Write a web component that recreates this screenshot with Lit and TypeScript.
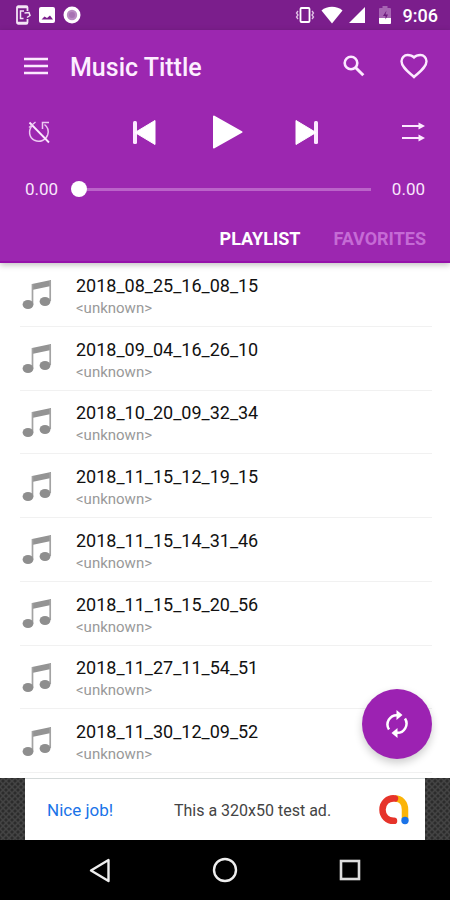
import { LitElement, html, css, svg } from "lit";
import { customElement, property, state } from "lit/decorators.js";
import { classMap } from "lit/directives/class-map.js";

const icon = (w: number, h: number, body: unknown) =>
  html`<svg width=${w} height=${h} viewBox="0 0 ${w} ${h}" fill="none" aria-hidden="true">${body}</svg>`;

const icons = {
  cast: icon(16, 20, svg`<path d="M12.500 6V2.500a1.300 1.300 0 0 0-1.300-1.300H3.300A1.300 1.300 0 0 0 2 2.500v15a1.300 1.300 0 0 0 1.300 1.300h7.900a1.300 1.300 0 0 0 1.300-1.300V14" stroke="#f3e5f5" stroke-width="1.800"/><path d="M2 2.200h10.500M2 17.800h10.500" stroke="#f3e5f5" stroke-width="2.200"/><path d="M9 6H5.500v7.500H8.500M9.500 8l4.500-.5 1 3-3 2" stroke="#f3e5f5" stroke-width="1.500"/>`),
  image: icon(16, 16, svg`<rect width="16" height="16" rx="2" fill="#fff"/><path d="M2.500 12.500l3-3 2.500 1.500 3-2.500 3 4z" fill="#7b1e8c"/>`),
  disc: icon(18, 18, svg`<circle cx="9" cy="9" r="8.500" fill="#fff"/><circle cx="9" cy="9" r="5.200" fill="#b98bc2"/><circle cx="9" cy="9" r="3" fill="#a873b3"/>`),
  vibrate: icon(20, 18, svg`<rect x="5.500" y="2" width="9" height="14" rx="1" stroke="#fff" stroke-width="1.800"/><path d="M3 5L1.500 7 3 9 1.500 11 3 13M17 5l1.500 2L17 9l1.500 2-1.500 2" stroke="#e1c4e6" stroke-width="1.300"/>`),
  wifi: icon(22, 18, svg`<path d="M0.500 4.500C6-.5 16-.5 21.500 4.500L11 17.500z" fill="#fff"/>`),
  signal: icon(16, 16, svg`<path d="M16 0v16H0z" fill="#fff"/>`),
  battery: icon(12, 18, svg`<path d="M3.500 0h5v2H11a1 1 0 0 1 1 1v9H0V3a1 1 0 0 1 1-1h2.500z" fill="#a765b3"/><path d="M0 12h12v5a1 1 0 0 1-1 1H1a1 1 0 0 1-1-1z" fill="#fff"/><path d="M7.500 4.500L4 10h2.500v3.500L9 8.500H6.500z" fill="#6d1a7d"/>`),
  menu: icon(24, 18, svg`<path d="M0 2h24M0 9h24M0 16h24" stroke="#fce9ff" stroke-width="2.600"/>`),
  search: icon(22, 22, svg`<circle cx="8" cy="8" r="6.300" stroke="#fce9ff" stroke-width="2.600"/><path d="M12.500 12.500L20.300 20.300" stroke="#fce9ff" stroke-width="3"/>`),
  heart: icon(28, 26, svg`<path d="M14 24C8 18.500 1.500 14 1.500 8.300 1.500 4.700 4.200 2 7.600 2 10.200 2 12.600 3 14 4.500 15.400 3 17.800 2 20.400 2c3.400 0 6.100 2.700 6.100 6.300C26.500 14 20 18.500 14 24z" stroke="#fce9ff" stroke-width="2.400"/>`),
  repeatOff: icon(24, 24, svg`<path d="M5.500 5.500C.8 10 2 17.500 7.500 20.300c5.500 2.500 11.500-.3 13.200-5.500 1.200-4-.2-8-3.200-10.300" stroke="#ecc9f2" stroke-width="1.500"/><path d="M22 2.500h-6.500V9" stroke="#ecc9f2" stroke-width="1.500"/><path d="M2.500 2.500L22 22.500" stroke="#fce9ff" stroke-width="1.800"/><path d="M2 7.500L8.500 2" stroke="#ecc9f2" stroke-width="1.300"/>`),
  previous: icon(24, 26, svg`<rect x="0" y="2" width="4" height="23" rx="1.500" fill="#fce9ff"/><path d="M2 13.500L22 1.500v24z" fill="#fff" stroke="#fff" stroke-linejoin="round"/>`),
  play: icon(36, 36, svg`<path d="M6 2.500L33.500 18 6 33.500z" fill="#fff" stroke="#fff" stroke-width="2" stroke-linejoin="round"/>`),
  next: icon(24, 26, svg`<rect x="19" y="2" width="4" height="23" rx="1.500" fill="#fce9ff"/><path d="M21 13.500L1 1.500v24z" fill="#fff" stroke="#fff" stroke-linejoin="round"/>`),
  order: icon(24, 20, svg`<path d="M1 4h18M1 16h18" stroke="#fce9ff" stroke-width="1.800"/><path d="M17.500 .5L24 4l-6.500 3.500zM17.500 12.500l6.500 3.500-6.500 3.500z" fill="#fce9ff"/>`),
  note: icon(30, 32, svg`<path d="M10 6L29 2v6L10 12z" fill="#949494"/><path d="M10.500 6v20.500M28.200 3v20" stroke="#a3a3a3" stroke-width="1.700"/><ellipse cx="6" cy="26.500" rx="5.400" ry="4.500" fill="#8e8e8e"/><ellipse cx="23" cy="23.500" rx="5.400" ry="4.500" fill="#8e8e8e"/>`),
  refresh: icon(24, 28, svg`<path d="M4 19.500A9.300 9.300 0 0 1 12.500 5.200M20 8.500A9.300 9.300 0 0 1 11.500 22.800" stroke="#fff" stroke-width="2.500"/><path d="M11.500 0l6 5-6 5zM12.500 18l-6 5 6 5z" fill="#fff"/>`),
  admob: icon(32, 32, svg`<path d="M17 4.500c6 0 10 4.500 10 11V25" stroke="#fbb408" stroke-width="6.500"/><path d="M17 4.500C10 3.500 4.500 9 4.500 15.800c0 6.500 5 11.300 11.500 11" stroke="#e6332a" stroke-width="6.500" stroke-linecap="round"/><circle cx="27" cy="26.500" r="3.700" fill="#1a73e8"/>`),
  back: icon(24, 26, svg`<path d="M3 13.500L20.500 3v21z" stroke="#eee" stroke-width="2.400" stroke-linejoin="round"/>`),
  home: icon(26, 26, svg`<circle cx="13" cy="13" r="11" stroke="#eee" stroke-width="2.400"/>`),
  recent: icon(22, 22, svg`<rect x="2" y="2" width="18" height="18" stroke="#ddd" stroke-width="2.600"/>`),
};

const reset = css`
  :host { display: block; }
  * { box-sizing: border-box; }
  svg { display: block; }
  button { display: flex; align-items: center; justify-content: center; margin: 0; padding: 0; border: 0; background: none; font: inherit; color: inherit; cursor: pointer; }
`;

@customElement("status-bar")
export class StatusBar extends LitElement {
  static styles = [reset, css`
    .bar { display: flex; align-items: center; justify-content: space-between; height: 30px; padding: 0 12px 0 15px; background: #7b1e8c; color: #fff; }
    .group { display: flex; align-items: center; }
    .left { gap: 8px; }
    .right { gap: 6px; }
    .power { display: flex; align-items: center; gap: 12px; margin-left: 8px; }
    .time { font-size: 18px; line-height: 20px; font-weight: 500; padding-top: 2px; }
  `];
  render() {
    return html`<div class="bar">
      <div class="group left">${icons.cast}${icons.image}${icons.disc}</div>
      <div class="group right">${icons.vibrate}${icons.wifi}${icons.signal}
        <div class="power">${icons.battery}<span class="time">9:06</span></div>
      </div>
    </div>`;
  }
}

@customElement("player-header")
export class PlayerHeader extends LitElement {
  @state() private tab = "PLAYLIST";
  static styles = [reset, css`
    :host { position: relative; z-index: 1; }
    .header { background: #9c27b0; color: #fff; border-bottom: 2px solid #9511aa; box-shadow: 0 2px 6px rgba(0, 0, 0, 0.25); }
    .toolbar { display: flex; align-items: center; height: 72px; padding: 0 22px 0 24px; }
    .title { flex: 1; margin: 0; padding: 4px 0 0 22px; font-size: 25px; line-height: 28px; font-weight: 500; color: #fdeeff; }
    .actions { display: flex; gap: 35px; }
    .controls { display: flex; align-items: center; justify-content: space-between; height: 60px; padding: 0 25px 0 27px; }
    .transport { display: flex; align-items: center; gap: 51px; }
    .seek { display: flex; align-items: center; gap: 13px; height: 54px; padding: 0 25px; font-size: 17px; line-height: 20px; color: #f9e6fc; }
    .slider { flex: 1; min-width: 0; height: 16px; margin: 0; appearance: none; background: linear-gradient(#bb63c9, #bb63c9) center / calc(100% - 16px) 3px no-repeat; }
    .slider::-webkit-slider-thumb { appearance: none; width: 16px; height: 16px; border-radius: 50%; background: #fff; }
    .tabs { display: flex; justify-content: flex-end; gap: 33px; height: 45px; padding: 0 24px; }
    .tab { font-size: 18px; line-height: 20px; font-weight: 700; color: #c56bd5; }
    .active { color: #fff; }
  `];
  render() {
    return html`<header class="header">
      <div class="toolbar">
        <button aria-label="Menu">${icons.menu}</button>
        <h1 class="title">Music Tittle</h1>
        <div class="actions">
          <button aria-label="Search">${icons.search}</button>
          <button aria-label="Favorite">${icons.heart}</button>
        </div>
      </div>
      <div class="controls">
        <button aria-label="Repeat off">${icons.repeatOff}</button>
        <div class="transport">
          <button aria-label="Previous">${icons.previous}</button>
          <button aria-label="Play">${icons.play}</button>
          <button aria-label="Next">${icons.next}</button>
        </div>
        <button aria-label="Play in order">${icons.order}</button>
      </div>
      <div class="seek">
        <span>0.00</span>
        <input class="slider" type="range" min="0" max="100" value="0" aria-label="Position">
        <span>0.00</span>
      </div>
      <nav class="tabs" role="tablist">
        ${["PLAYLIST", "FAVORITES"].map((name) => html`<button role="tab" aria-selected=${this.tab === name}
          class=${classMap({ tab: true, active: this.tab === name })} @click=${() => (this.tab = name)}>${name}</button>`)}
      </nav>
    </header>`;
  }
}

@customElement("track-list")
export class TrackList extends LitElement {
  @property({ type: Array }) tracks: string[] = [];
  static styles = [reset, css`
    :host { display: flex; flex-direction: column; flex: 1; position: relative; background: #fff; }
    .list { flex: 1; display: flex; flex-direction: column; margin: 0; padding: 0 18px 5px 20px; list-style: none; }
    .row { flex: 1; display: flex; align-items: center; gap: 24px; padding-left: 2px; border-bottom: 1px solid #f1f1f1; }
    .text { padding-top: 5px; }
    .name { font-size: 18px; line-height: 22px; color: #111; }
    .artist { font-size: 15px; line-height: 22px; color: #999; }
    .fab { position: absolute; right: 18px; bottom: 19px; width: 70px; height: 70px; border-radius: 50%; background: #9c22b2; box-shadow: 0 4px 8px rgba(0, 0, 0, 0.2); }
  `];
  render() {
    return html`<ul class="list">
        ${this.tracks.map((name) => html`<li class="row">${icons.note}
          <div class="text"><div class="name">${name}</div><div class="artist">&lt;unknown&gt;</div></div>
        </li>`)}
      </ul>
      <button class="fab" aria-label="Refresh">${icons.refresh}</button>`;
  }
}

@customElement("ad-banner")
export class AdBanner extends LitElement {
  static styles = [reset, css`
    .strip { padding: 0 25px; background: radial-gradient(#2c2c2c 1px, transparent 2px) 0 0 / 6px 6px, radial-gradient(#2c2c2c 1px, transparent 2px) 3px 3px / 6px 6px, #444; }
    .ad { display: flex; align-items: center; height: 62px; padding: 0 15px 0 22px; background: #fff; border-top: 1px solid #d5dada; color: #444; font-size: 16px; line-height: 20px; text-decoration: none; }
    .praise { font-size: 17px; color: #1a73e8; }
    .copy { flex: 1; text-align: center; padding: 2px 0 0 14px; }
  `];
  render() {
    return html`<div class="strip"><a class="ad" href="#">
      <span class="praise">Nice job!</span><span class="copy">This a 320x50 test ad.</span>${icons.admob}
    </a></div>`;
  }
}

@customElement("system-nav")
export class SystemNav extends LitElement {
  static styles = [reset, css`
    .nav { display: flex; height: 60px; padding: 0 38px; background: #000; }
    .key { flex: 1; }
  `];
  render() {
    return html`<nav class="nav">
      <button class="key" aria-label="Back">${icons.back}</button>
      <button class="key" aria-label="Home">${icons.home}</button>
      <button class="key" aria-label="Recent apps">${icons.recent}</button>
    </nav>`;
  }
}

@customElement("app-root")
export class AppRoot extends LitElement {
  static styles = css`
    :host { display: flex; flex-direction: column; min-height: 100vh; background: #fff; font-family: Roboto, "Liberation Sans", sans-serif; }
  `;
  private tracks = [
    "2018_08_25_16_08_15", "2018_09_04_16_26_10", "2018_10_20_09_32_34", "2018_11_15_12_19_15",
    "2018_11_15_14_31_46", "2018_11_15_15_20_56", "2018_11_27_11_54_51", "2018_11_30_12_09_52",
  ];
  render() {
    return html`<status-bar></status-bar>
      <player-header></player-header>
      <track-list .tracks=${this.tracks}></track-list>
      <ad-banner></ad-banner>
      <system-nav></system-nav>`;
  }
}
